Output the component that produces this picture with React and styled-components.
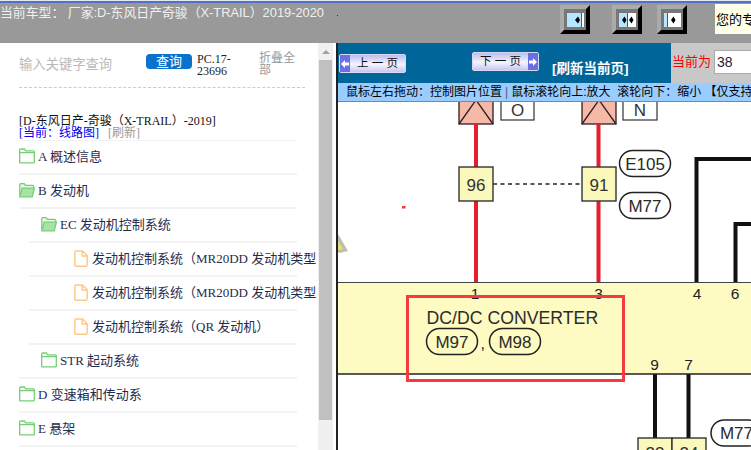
import React from 'react'
import styled, { createGlobalStyle } from 'styled-components'

const tree = [
    { level: 0, icon: 'closed', text: 'A 概述信息' },
    { level: 0, icon: 'open', text: 'B 发动机' },
    { level: 1, icon: 'open', text: 'EC 发动机控制系统' },
    { level: 2, icon: 'file', text: '发动机控制系统（MR20DD 发动机类型 1）' },
    { level: 2, icon: 'file', text: '发动机控制系统（MR20DD 发动机类型 2）' },
    { level: 2, icon: 'file', text: '发动机控制系统（QR 发动机）' },
    { level: 1, icon: 'closed', text: 'STR 起动系统', flush: true },
    { level: 0, icon: 'closed', text: 'D 变速箱和传动系' },
    { level: 0, icon: 'closed', text: 'E 悬架' },
]

function TreeIcon({ type }) {
    if (type === 'file') {
        return (
            <IconSlot>
                <svg width="14" height="17" viewBox="0 0 14 17" fill="none" stroke="#fcc98c" strokeWidth="1.5">
                    <path d="M1.8 1h6.7l4.7 4.800v8.900c0 .9-.6 1.500-1.500 1.500H1.800c-.6 0-1-.6-1-1.200V2c0-.6.4-1 1-1z" />
                    <path d="M8.200 1v5h5" />
                </svg>
            </IconSlot>
        )
    }
    if (type === 'open') {
        return (
            <IconSlot>
                <svg width="16" height="16" viewBox="0 0 16 16" fill="none" stroke="#74cf74" strokeWidth="1.3">
                    <path d="M.8 13.500V2.500c0-.5.3-.9.8-.9h3.600l1.300 1.700h7.300c.6 0 .9.4.9.9v1.500" fill="#e6f7e6" />
                    <path d="M.8 14.800l2.400-8.600h12.200l-2.200 8.600H.8z" fill="#a9e2a9" />
                </svg>
            </IconSlot>
        )
    }
    return (
        <IconSlot>
            <svg width="16" height="16" viewBox="0 0 16 16" fill="none" stroke="#74cf74" strokeWidth="1.3">
                <path d="M.7 14V2c0-.6.3-1 .9-1h3.800l1.300 1.800h7.700c.6 0 .9.4.9 1V14c0 .6-.3.9-.9.9H1.600c-.6 0-.9-.3-.9-.9z" />
                <path d="M.7 4.600h15" />
            </svg>
        </IconSlot>
    )
}

// split = where the blue pane ends, marks = the black diamond arrows
function PaneIcon({ split, marks }) {
    return (
        <svg width="17" height="14" viewBox="0 0 17 14">
            <rect width="17" height="14" fill="#fff" />
            <rect width={split} height="14" fill="#b4e6ff" />
            <rect x={split} width="1" height="14" fill="#555" />
            <path d={marks} fill="#000" />
        </svg>
    )
}

function PageButton({ next, children }) {
    const arrow = (
        <ArrowCap>
            <svg width="10" height="10" viewBox="0 0 10 10">
                <path d={next ? 'M1 3.500h4V1l4 4-4 4V6.500H1z' : 'M9 3.500H5V1L1 5l4 4V6.500h4z'} fill="#fff" />
            </svg>
        </ArrowCap>
    )
    return (
        <PagerButton $next={next}>
            {!next && arrow}
            <PagerLabel>{children}</PagerLabel>
            {next && arrow}
        </PagerButton>
    )
}

function Pill({ x, y, w = 51, h = 26, label }) {
    return (
        <g>
            <rect x={x} y={y} width={w} height={h} rx={h / 2} fill="none" stroke="#222" strokeWidth="1.500" />
            <text x={x + w / 2} y={y + h / 2 + 6} textAnchor="middle" fontSize="17" fill="#2a2a2a">{label}</text>
        </g>
    )
}

function Diagram() {
    return (
        <svg width="413" height="348" viewBox="338 102 413 348" fontFamily="'Liberation Sans', Arial, sans-serif">
            <rect x="338" y="102" width="413" height="348" fill="#fff" />

            {/* connectors at the top */}
            {[459, 582].map(x => (
                <g key={x} stroke="#2c2020" strokeWidth="1.300">
                    <rect x={x} y="96" width="34" height="28" fill="#f6b8a7" />
                    <path d={`M${x} 124L${x + 17} 100L${x + 34} 124`} fill="none" />
                </g>
            ))}
            <rect x="501" y="96" width="33" height="24" fill="#fff" stroke="#333" strokeWidth="1.200" />
            <text x="517.500" y="116" textAnchor="middle" fontSize="17" fill="#333">O</text>
            <rect x="623" y="96" width="34" height="24" fill="#fff" stroke="#333" strokeWidth="1.200" />
            <text x="640" y="116" textAnchor="middle" fontSize="17" fill="#333">N</text>

            {/* red wires */}
            <path d="M476 124V284M598.500 124V284" stroke="#e81d2d" strokeWidth="4" fill="none" />

            {/* black wires */}
            <path d="M696.500 284V159H751" stroke="#111" strokeWidth="4" fill="none" />
            <path d="M735.500 284V224H751" stroke="#111" strokeWidth="4" fill="none" />
            <path d="M655 374V438M688.500 374V438" stroke="#111" strokeWidth="4" fill="none" />

            {/* splice boxes */}
            <path d="M493 184H582" stroke="#222" strokeWidth="1.500" strokeDasharray="4 3.500" />
            {[[459, '96'], [582, '91']].map(([x, label]) => (
                <g key={label}>
                    <rect x={x} y="167" width="34" height="34" fill="#fbf8bb" stroke="#333" strokeWidth="1.400" />
                    <text x={x + 17} y="190.500" textAnchor="middle" fontSize="17" fill="#333">{label}</text>
                </g>
            ))}
            <Pill x={619.500} y={150.500} label="E105" />
            <Pill x={619.500} y={192.500} label="M77" />

            <rect x="402" y="206" width="3.500" height="2.500" fill="#f33" />
            <path d="M338 234L348 251L340 253L338 252z" fill="#bdbdb0" />
            <path d="M338 241L343 249L338 250z" fill="#e6e070" />

            {/* unit band */}
            <rect x="338" y="282.500" width="413" height="91.500" fill="#fdfac2" />
            <path d="M338 282.500H751" stroke="#444" strokeWidth="1.200" />
            <path d="M338 374H751" stroke="#222" strokeWidth="1.600" />
            {[[475, 299, '1'], [598.500, 299, '3'], [697, 299, '4'], [735, 299, '6'], [654.500, 369.500, '9'], [688.500, 369.500, '7']].map(([x, y, label]) => (
                <text key={label} x={x} y={y} textAnchor="middle" fontSize="15.500" fill="#222">{label}</text>
            ))}
            <text x="426.500" y="323.500" fontSize="17.700" fill="#2c2c2c">DC/DC CONVERTER</text>
            <Pill x={426.500} y={328.500} label="M97" />
            <text x="480.500" y="349" fontSize="16" fill="#222">,</text>
            <Pill x={489.500} y={328.500} label="M98" />

            {/* clipped boxes at the bottom */}
            {[[638, '23'], [672, '24']].map(([x, label]) => (
                <g key={label}>
                    <rect x={x} y="438" width="34" height="34" fill="#fbf8bb" stroke="#333" strokeWidth="1.400" />
                    <text x={x + 17} y="459" textAnchor="middle" fontSize="17" fill="#333">{label}</text>
                </g>
            ))}
            <Pill x={711} y={420} label="M77" />

            {/* highlight */}
            <rect x="407.500" y="296.500" width="216" height="84" fill="none" stroke="#f73a3f" strokeWidth="3" />
        </svg>
    )
}

function App() {
    return (
        <Page>
            <GlobalStyle />
            <TopEdge />
            <TopBar>
                <CarTitle>当前车型： 厂家:D-东风日产奇骏（X-TRAIL）2019-2020</CarTitle>
                <Dot />
                <ToolGroup>
                    <ToolButton><PaneIcon split={14} marks="M8 7l3-3.500 2 3.500-2 3.500z" /></ToolButton>
                    <ToolButton $gap={22}><PaneIcon split={8} marks="M3 7l2.500-3.500L7.500 7l-2 3.500zM10 7l2.500-3.500L14.500 7l-2 3.500z" /></ToolButton>
                    <ToolButton $gap={15}><PaneIcon split={3} marks="M7 7l2.500-3.500L11.500 7l-2 3.500z" /></ToolButton>
                </ToolGroup>
                <Notice>您的专</Notice>
            </TopBar>

            <Main>
                <Sidebar>
                    <SideContent>
                        <SearchRow>
                            <SearchHint>输入关键字查询</SearchHint>
                            <SearchButton>查询</SearchButton>
                            <Version>PC.17-23696</Version>
                            <FoldAll>折叠全部</FoldAll>
                        </SearchRow>
                        <CarInfo>
                            <CarName>[D-东风日产-奇骏（X-TRAIL）-2019]</CarName>
                            <CarLinks>
                                <CurrentLink>[当前：线路图]</CurrentLink>
                                <RefreshLink>[刷新]</RefreshLink>
                            </CarLinks>
                        </CarInfo>
                        {tree.map(item => (
                            <TreeRow key={item.text} $level={item.level} $flush={item.flush}>
                                <TreeIcon type={item.icon} />
                                <TreeText $file={item.icon === 'file'}>{item.text}</TreeText>
                            </TreeRow>
                        ))}
                    </SideContent>
                    <ScrollBar>
                        <ScrollArrow />
                        <ScrollThumb />
                    </ScrollBar>
                </Sidebar>

                <Viewer>
                    <Controls>
                        <Pager>
                            <PageButton>上 一 页</PageButton>
                            <PageButton next>下 一 页</PageButton>
                            <RefreshPage>[刷新当前页]</RefreshPage>
                        </Pager>
                        <PageBox>
                            <PageLabel>当前为</PageLabel>
                            <PageInput readOnly value="38" />
                        </PageBox>
                    </Controls>
                    <HelpBar>鼠标左右拖动：控制图片位置<HelpSep>|</HelpSep>鼠标滚轮向上:放大&nbsp;&nbsp;滚轮向下：缩小 【仅支持</HelpBar>
                    <Diagram />
                </Viewer>
            </Main>
        </Page>
    )
}

export default App

const GlobalStyle = createGlobalStyle`
    html, body {
        margin: 0;
        padding: 0;
        background: #fff;
        overflow: hidden;
    }
`

const Page = styled.div`
    width: 751px;
    height: 450px;
    overflow: hidden;
    display: flex;
    flex-direction: column;
    font-family: 'Liberation Sans', 'Noto Sans CJK SC', sans-serif;
    font-size: 12px;
`

const TopEdge = styled.div`
    height: 3px;
    flex: none;
    background: linear-gradient(#e8e8f0 0 1px, #5072c6 1px);
`

const TopBar = styled.div`
    height: 40px;
    flex: none;
    display: flex;
    align-items: flex-start;
    background: #999999;
`

const CarTitle = styled.div`
    width: 337px;
    flex: none;
    margin-top: 1px;
    color: #f0f0f0;
    font-size: 12.850px;
    line-height: 17px;
    white-space: pre;
`

const Dot = styled.div`
    width: 1px;
    height: 1px;
    flex: none;
    margin-top: 12px;
    background: #333;
`

const ToolGroup = styled.div`
    display: flex;
    flex: none;
    margin: 2px 0 0 222px;
`

const ToolButton = styled.div`
    width: 30px;
    height: 29px;
    box-sizing: border-box;
    margin-left: ${p => p.$gap || 0}px;
    display: flex;
    align-items: center;
    justify-content: center;
    background: #777;
    border: 4px solid;
    border-color: #ababab #000 #000 #ababab;
`

const Notice = styled.div`
    margin: 1px 0 0 28px;
    flex: 1;
    height: 30px;
    padding-left: 1px;
    background: #ffffe8;
    color: #000;
    font-size: 13px;
    line-height: 31px;
    white-space: nowrap;
    overflow: hidden;
`

const Main = styled.div`
    flex: 1;
    display: flex;
    min-height: 0;
`

const Sidebar = styled.div`
    width: 336px;
    flex: none;
    display: flex;
    background: #fff;
`

const SideContent = styled.div`
    width: 318px;
    flex: none;
    overflow: hidden;
    padding-top: 10px;
    box-sizing: border-box;
`

const SearchRow = styled.div`
    margin-left: 19px;
    width: 286px;
    height: 34px;
    display: flex;
    align-items: flex-start;
    border-bottom: 1px dashed #cccccc;
`

const SearchHint = styled.div`
    width: 127px;
    flex: none;
    margin-top: 2px;
    color: #b9b9b9;
    font-size: 13.300px;
    line-height: 20px;
`

const SearchButton = styled.div`
    width: 46px;
    height: 15px;
    margin-top: 1px;
    flex: none;
    border-radius: 4px;
    background: #0a72cc;
    color: #fff;
    font-size: 13px;
    line-height: 15px;
    text-align: center;
`

const Version = styled.div`
    width: 36px;
    margin-left: 5px;
    flex: none;
    font-family: 'Liberation Serif', serif;
    color: #222;
    font-size: 12px;
    line-height: 12px;
`

const FoldAll = styled.div`
    width: 38px;
    margin-left: 26px;
    flex: none;
    color: #999;
    font-size: 12px;
    line-height: 11.500px;
`

const CarInfo = styled.div`
    margin: 27px 0 0 19px;
    width: 278px;
    height: 25px;
    border-bottom: 1px solid #f3f3f3;
    font-family: 'Liberation Serif', 'Noto Sans CJK SC', serif;
    font-size: 12px;
    line-height: 12px;
`

const CarName = styled.div`
    color: #111;
    white-space: nowrap;
`

const CarLinks = styled.div`
    display: flex;
    gap: 9px;
`

const CurrentLink = styled.span`
    color: #0000ee;
`

const RefreshLink = styled.span`
    color: #999;
`

const TreeRow = styled.div`
    height: 34px;
    box-sizing: border-box;
    margin-left: ${p => (p.$level > 0 && !p.$flush ? 29 : 19)}px;
    width: ${p => (p.$level > 0 && !p.$flush ? 268 : 278)}px;
    padding-bottom: 2px;
    padding-left: ${p => {
        if (p.$level === 2) return 45
        if (p.$level === 1) return p.$flush ? 22 : 12
        return 0
    }}px;
    display: flex;
    align-items: center;
    border-bottom: 2px solid #f3f3f3;
    white-space: nowrap;
`

const IconSlot = styled.span`
    flex: none;
    display: flex;
`

const TreeText = styled.span`
    flex: none;
    margin: 0 0 2px ${p => (p.$file ? 4 : 3)}px;
    color: #1f2d4f;
    font-family: 'Liberation Serif', 'Noto Sans CJK SC', serif;
    font-size: 13px;
`

const ScrollBar = styled.div`
    width: 15px;
    flex: none;
    margin-right: 3px;
    background: #f0f0f0;
    display: flex;
    flex-direction: column;
    align-items: center;
    padding-top: 7px;
    box-sizing: border-box;
`

const ScrollArrow = styled.div`
    width: 0;
    height: 0;
    border-left: 4px solid transparent;
    border-right: 4px solid transparent;
    border-bottom: 4px solid #a0a0a0;
`

const ScrollThumb = styled.div`
    width: 13px;
    height: 360px;
    margin-top: 6px;
    background: #c0c0c0;
`

const Viewer = styled.div`
    flex: 1;
    min-width: 0;
    border-left: 2px solid #222;
    display: flex;
    flex-direction: column;
`

const Controls = styled.div`
    height: 40px;
    flex: none;
    display: flex;
`

const Pager = styled.div`
    width: 333px;
    flex: none;
    background: #006699;
    display: flex;
    align-items: flex-start;
`

const PagerButton = styled.div`
    width: 67px;
    height: 19px;
    margin: ${p => (p.$next ? '9px 0 0 66px' : '11px 0 0 1px')};
    flex: none;
    box-sizing: border-box;
    display: flex;
    align-items: stretch;
    border: 1px solid #d6d8f4;
    border-radius: 2px;
    background: linear-gradient(#b9bdf0, #f4f4ff 55%, #c5c8f2);
`

const ArrowCap = styled.div`
    width: 10px;
    flex: none;
    display: flex;
    align-items: center;
    justify-content: center;
    background: #6a70e2;
`

const PagerLabel = styled.span`
    flex: 1;
    text-align: center;
    color: #111;
    font-size: 11.500px;
    line-height: 16px;
    white-space: nowrap;
`

const RefreshPage = styled.div`
    margin: 18px 0 0 13px;
    color: #fff;
    font-size: 13.500px;
    line-height: 16px;
    font-weight: 700;
    white-space: nowrap;
`

const PageBox = styled.div`
    flex: 1;
    display: flex;
    background: #c8c8c8;
    padding-left: 1px;
`

const PageLabel = styled.span`
    color: #ff0000;
    font-size: 13px;
    line-height: 38px;
    white-space: nowrap;
`

const PageInput = styled.input`
    width: 60px;
    height: 24px;
    margin: 7px 0 0 3px;
    flex: none;
    box-sizing: border-box;
    padding: 0 2px;
    border: 1px solid #aaa;
    background: #fff;
    color: #223;
    font-family: 'Liberation Sans', sans-serif;
    font-size: 14px;
    outline: none;
`

const HelpBar = styled.div`
    height: 18px;
    flex: none;
    padding-left: 8px;
    background: #99ccff;
    color: #000;
    font-size: 12px;
    line-height: 18px;
    white-space: nowrap;
    overflow: hidden;
    border-bottom: 1px solid #4f8fe0;
`

const HelpSep = styled.span`
    margin: 0 3px;
    color: #557;
`
